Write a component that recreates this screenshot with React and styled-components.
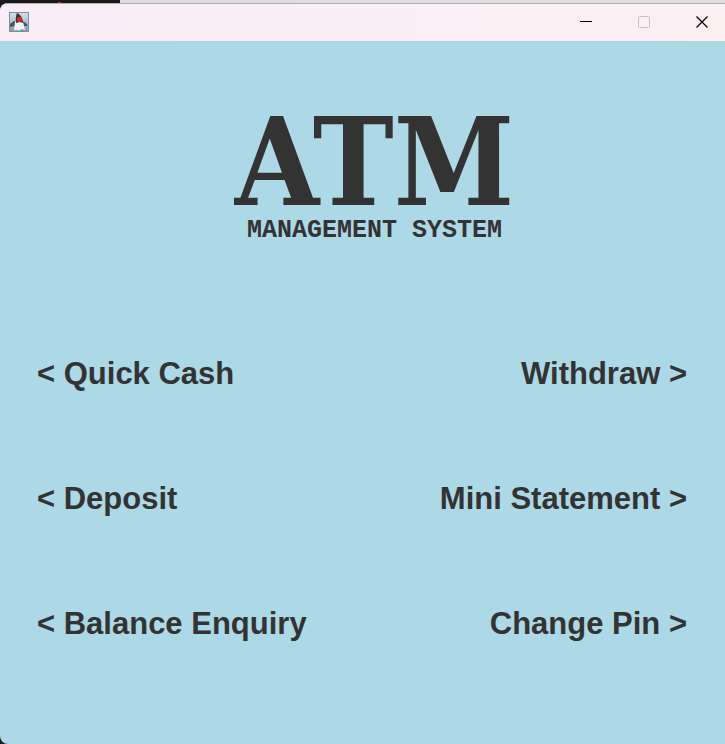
import React from "react";
import styled, { createGlobalStyle } from "styled-components";

const GlobalStyle = createGlobalStyle`
  * { box-sizing: border-box; }
  body { margin: 0; background: #1c1a1b; }
`;
const Desktop = styled.div`
  min-height: 100vh;
  display: flex;
  flex-direction: column;
  padding-top: 3px;
  background:
    linear-gradient(#d8202c, #d8202c) 58px 2px / 3px 2px no-repeat,
    linear-gradient(90deg, #1c1a1b 120px, #dfdddf 120px) top / 100% 3px no-repeat,
    #1c1a1b;
`;
const Window = styled.main`
  flex: 1;
  display: flex;
  flex-direction: column;
  background: #add8e6;
  border-radius: 8px 0 0 8px;
  overflow: hidden;
  color: #333333;
`;
const TitleBar = styled.header`
  height: 38px;
  display: flex;
  align-items: flex-start;
  justify-content: space-between;
  padding-left: 9px;
  border-top: 1px solid #b3adb0;
  background: linear-gradient(90deg, #f9eef8, #faeff1);
`;
const AppIcon = styled.svg`
  margin-top: 8px;
`;
const Controls = styled.div`
  display: flex;
  gap: 12px;
`;
const WindowButton = styled.button`
  width: 46px;
  height: 36px;
  padding: 0;
  border: 0;
  background: none;
  color: ${(p) => (p.disabled ? "#c8c0c4" : "#000")};
  display: grid;
  place-items: center;
`;
const Heading = styled.h1`
  margin: 66px 0 0;
  padding-left: 24px;
  display: flex;
  flex-direction: column;
  align-items: center;
  font-weight: bold;
`;
const Name = styled.span`
  font-family: "DejaVu Serif Condensed", "DejaVu Serif", serif;
  font-size: 121px;
  line-height: 112px;
`;
const Subtitle = styled.span`
  font-family: "Liberation Mono", "Courier New", monospace;
  font-size: 25px;
  line-height: 24px;
`;
const Menu = styled.nav`
  margin-top: 111px;
  padding: 0 38px 0 37px;
  display: grid;
  grid-template-columns: auto auto;
  justify-content: space-between;
  row-gap: 85px;
`;
const MenuButton = styled.button`
  border: 0;
  padding: 0;
  background: none;
  color: inherit;
  font: bold 31px/40px "Liberation Sans", Arial, sans-serif;
  text-align: ${(p) => p.$align};
  white-space: nowrap;
`;

const rows = [
  ["Quick Cash", "Withdraw"],
  ["Deposit", "Mini Statement"],
  ["Balance Enquiry", "Change Pin"],
];

function DukeIcon() {
  return (
    <AppIcon width="20" height="20" viewBox="0 0 20 20" aria-hidden="true">
      <defs>
        <linearGradient id="sky" x1="0" y1="0" x2="0" y2="1">
          <stop offset="0" stopColor="#d3e1ea" />
          <stop offset=".6" stopColor="#a9bac8" />
          <stop offset="1" stopColor="#7f95a8" />
        </linearGradient>
      </defs>
      <rect x=".5" y=".5" width="19" height="19" fill="url(#sky)" stroke="#7890a6" />
      <path d="M1 12L5 9L8 9L7 14L1 15Z" fill="#4c535a" />
      <path d="M13 9L17 11L19 14L15 14Z" fill="#4c535a" />
      <path d="M6 10C7 7 13 7 14 10L16 18L13 17L10 18.5L7 18L5 18.5Z" fill="#f3f3f3" />
      <path d="M8 1C11 2 14 6 14 11L11 10L7 11C6.500 7 7 3 8 1Z" fill="#373739" />
      <circle cx="10.5" cy="7.5" r="2.5" fill="#e02420" />
    </AppIcon>
  );
}

export default function App() {
  return (
    <Desktop>
      <GlobalStyle />
      <Window>
        <TitleBar>
          <DukeIcon />
          <Controls>
            <WindowButton aria-label="Minimize"><svg width="12" height="12"><path d="M0 5.5H12" stroke="currentColor" /></svg></WindowButton>
            <WindowButton aria-label="Maximize" disabled><svg width="12" height="12" fill="none"><rect x=".5" y=".5" width="11" height="11" rx="1" stroke="currentColor" /></svg></WindowButton>
            <WindowButton aria-label="Close"><svg width="12" height="12"><path d="M.5 .5L11.5 11.5M11.5 .5L.5 11.5" stroke="currentColor" strokeWidth="1.2" /></svg></WindowButton>
          </Controls>
        </TitleBar>
        <Heading><Name>ATM</Name><Subtitle>MANAGEMENT SYSTEM</Subtitle></Heading>
        <Menu>
          {rows.map(([l, r]) => (
            <React.Fragment key={l}>
              <MenuButton $align="left">{"< " + l}</MenuButton>
              <MenuButton $align="right">{r + " >"}</MenuButton>
            </React.Fragment>
          ))}
        </Menu>
      </Window>
    </Desktop>
  );
}
